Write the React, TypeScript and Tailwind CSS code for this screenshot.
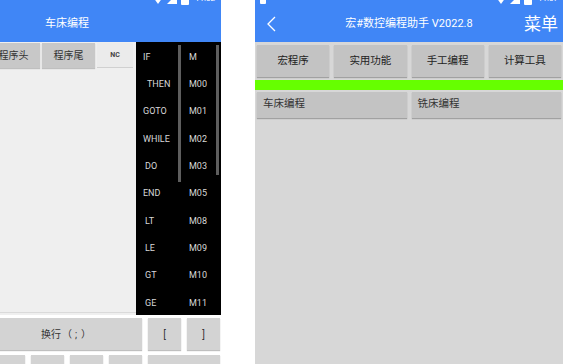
import React from "react";

function StatusIcons({ time }: { time: string }) {
  return (
    <div className="flex items-center gap-[4px] text-white">
      <svg width="10" height="10" viewBox="0 0 10 10">
        <path d="M0 3 Q5 -1 10 3 L5 10 Z" fill="white" />
      </svg>
      <svg width="10" height="10" viewBox="0 0 10 10">
        <path d="M10 0 L10 10 L0 10 Z" fill="white" />
      </svg>
      <svg width="8" height="12" viewBox="0 0 8 12">
        <rect x="2" y="0" width="4" height="2" fill="white" />
        <rect x="0" y="1.5" width="8" height="10.5" rx="1" fill="white" />
      </svg>
      <span className="text-[8px] leading-none ml-[2px]">{time}</span>
    </div>
  );
}

const kw = [
  ["IF", "M", "pl-[7px]"],
  ["THEN", "M00", "pl-[11px]"],
  ["GOTO", "M01", "pl-[7px]"],
  ["WHILE", "M02", "pl-[7px]"],
  ["DO", "M03", "pl-[9px]"],
  ["END", "M05", "pl-[7px]"],
  ["LT", "M08", "pl-[9px]"],
  ["LE", "M09", "pl-[9px]"],
  ["GT", "M10", "pl-[9px]"],
  ["GE", "M11", "pl-[9px]"],
];

function Key({ children, className = "" }: { children?: React.ReactNode; className?: string }) {
  return (
    <div
      className={
        "h-[32px] bg-[#d3d3d3] shadow-[0_1px_1px_rgba(0,0,0,0.25)] flex items-center justify-center text-[10px] text-[#333] " +
        className
      }
    >
      {children}
    </div>
  );
}

function LeftPhone() {
  return (
    <div className="w-[308px] h-[364px] ml-[-87px] shrink-0 flex flex-col overflow-hidden">
      <div className="h-[42px] bg-[#4086f6] flex flex-col shrink-0">
        <div className="h-[14px] -mt-[8px] flex justify-end items-center pr-[6px]">
          <StatusIcons time="11:02" />
        </div>
        <div className="flex-1 flex items-center justify-center text-white text-[11px]">车床编程</div>
      </div>
      <div className="h-[273px] flex shrink-0">
        <div className="flex-1 bg-[#efefef] flex flex-col">
          <div className="h-[26px] pt-[1px] flex justify-end gap-[2px] pr-[3px]">
            <div className="w-[53px] bg-[#c8c8c8] shadow-[0_1px_1px_rgba(0,0,0,0.2)] flex items-center justify-center text-[10px] text-[#333]">清空</div>
            <div className="w-[53px] bg-[#c8c8c8] shadow-[0_1px_1px_rgba(0,0,0,0.2)] flex items-center justify-center text-[10px] text-[#333]">程序头</div>
            <div className="w-[53px] bg-[#c8c8c8] shadow-[0_1px_1px_rgba(0,0,0,0.2)] flex items-center justify-center text-[10px] text-[#333]">程序尾</div>
            <div className="w-[36px] bg-[#ebebeb] border-b border-[#d0d0d0] flex items-center justify-center text-[7px] font-bold text-[#444]">NC</div>
          </div>
          <div className="flex-1 mb-[2px] border-b border-[#dadada]" />
        </div>
        <div className="w-[85px] bg-black flex overflow-hidden">
          <div className="w-[45px] relative flex flex-col pt-[2px]">
            {kw.map(([a, , p]) => (
              <div key={a} className={"h-[27.3px] shrink-0 flex items-center text-[9px] text-[#d8d8d8] " + p}>
                {a}
              </div>
            ))}
            <div className="absolute right-[0px] top-[3px] w-[3px] h-[137px] bg-[#5e5e5e]" />
          </div>
          <div className="flex-1 relative flex flex-col pt-[2px]">
            {kw.map(([a, b]) => (
              <div key={a} className="h-[27.3px] shrink-0 flex items-center pl-[8px] text-[9px] text-[#d8d8d8]">
                {b}
              </div>
            ))}
            <div className="absolute right-[2px] top-[3px] w-[3px] h-[130px] bg-[#5e5e5e]" />
          </div>
        </div>
      </div>
      <div className="flex-1 bg-white pt-[3px] px-[1px] grid grid-cols-8 gap-x-[6px] gap-y-[5px] content-start">
        <Key />
        <Key />
        <Key className="col-span-4">
          换行<span className="inline-block w-[12px] text-center">（</span><span className="inline-block w-[6px] text-center">;</span><span className="inline-block w-[14px] text-center">）</span>
        </Key>
        <Key>[</Key>
        <Key>]</Key>
        <Key />
        <Key />
        <Key />
        <Key />
        <Key />
        <Key />
        <Key className="col-span-2" />
      </div>
    </div>
  );
}

function Tab({ children }: { children: React.ReactNode }) {
  return (
    <div className="flex-1 h-[32px] bg-[#c3c3c3] shadow-[0_1px_1px_rgba(0,0,0,0.25)] flex items-center justify-center text-[10.5px] text-[#222]">
      {children}
    </div>
  );
}

function RightPhone() {
  return (
    <div className="w-[308px] h-[364px] ml-[34px] shrink-0 flex flex-col overflow-hidden">
      <div className="h-[42px] bg-[#4086f6] flex flex-col shrink-0">
        <div className="h-[14px] -mt-[8px] flex justify-between items-center pl-[5px] pr-[5px]">
          <div className="w-[6px] h-[10px] bg-white rounded-[1px]" />
          <StatusIcons time="11:07" />
        </div>
        <div className="flex-1 grid grid-cols-[60px_1fr_60px] items-center text-white">
          <div className="pl-[12px] flex items-center">
            <svg width="9" height="16" viewBox="0 0 9 16">
              <polyline points="8,1 1,8 8,15" fill="none" stroke="white" strokeWidth="1.3" />
            </svg>
          </div>
          <div className="text-center text-[11px] whitespace-nowrap">宏#数控编程助手 V2022.8</div>
          <div className="flex justify-end pr-[5px] text-[17px] leading-none">菜单</div>
        </div>
      </div>
      <div className="flex-1 bg-[#d7d7d7] flex flex-col">
        <div className="flex gap-[5px] px-[2px] pt-[3px]">
          <Tab>宏程序</Tab>
          <Tab>实用功能</Tab>
          <Tab>手工编程</Tab>
          <Tab>计算工具</Tab>
        </div>
        <div className="h-[10px] mt-[3px] bg-[#66ff00]" />
        <div className="flex gap-[5px] px-[2px] mt-[2px]">
          <div className="flex-1 h-[26px] bg-[#c3c3c3] shadow-[0_1px_1px_rgba(0,0,0,0.25)] pl-[6px] pt-[4px] text-[10.5px] text-[#333]">车床编程</div>
          <div className="flex-1 h-[26px] bg-[#c3c3c3] shadow-[0_1px_1px_rgba(0,0,0,0.25)] pl-[6px] pt-[4px] text-[10.5px] text-[#333]">铣床编程</div>
        </div>
      </div>
    </div>
  );
}

export default function App() {
  return (
    <div className="w-[565px] h-[364px] bg-white overflow-hidden flex [font-family:Roboto,'Noto_Sans_CJK_SC',sans-serif]">
      <LeftPhone />
      <RightPhone />
    </div>
  );
}
